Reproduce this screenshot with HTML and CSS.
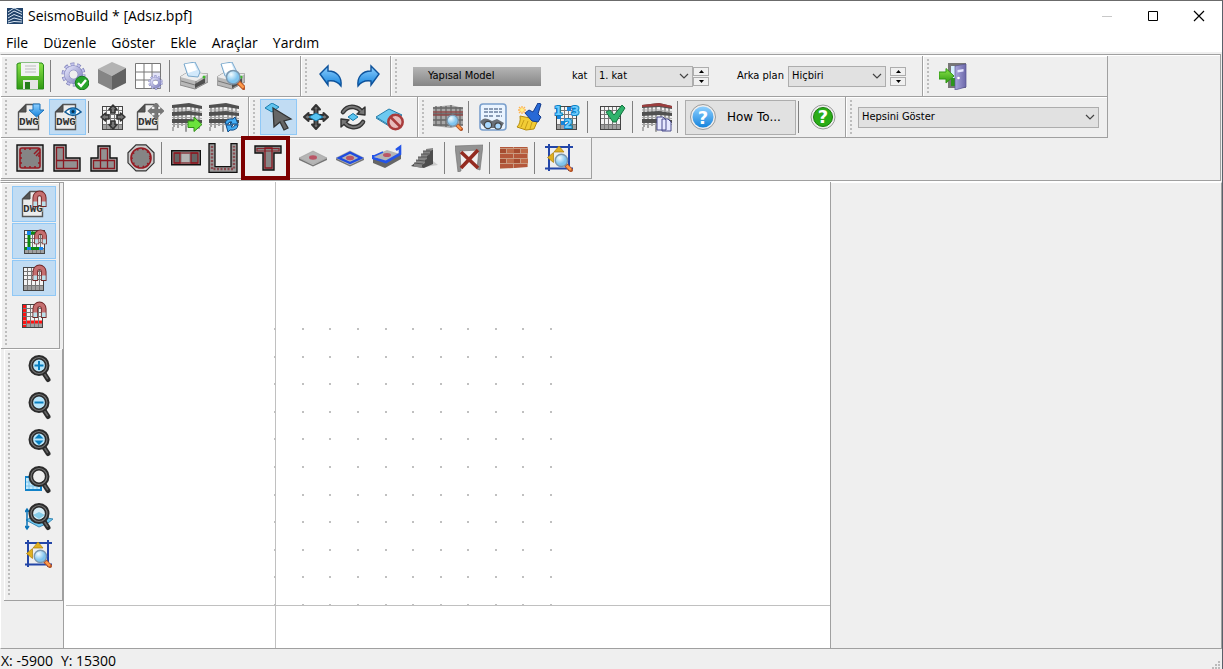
FILE: index.html
```html
<!DOCTYPE html>
<html lang="tr">
<head>
<meta charset="utf-8">
<title>SeismoBuild * [Adsız.bpf]</title>
<link rel="stylesheet" href="styles.css">
</head>
<body>
<svg class="defs" width="0" height="0" aria-hidden="true">
  <defs>
    <linearGradient id="g-green" x2="0" y2="1"><stop stop-color="#8be34a"/><stop offset="1" stop-color="#2f9a12"/></linearGradient>
    <linearGradient id="g-blue" x2="0" y2="1"><stop stop-color="#8fd0ff"/><stop offset="1" stop-color="#1583dc"/></linearGradient>
    <linearGradient id="g-lilac" x2="1" y2="1"><stop stop-color="#dfe0f8"/><stop offset="1" stop-color="#8586c0"/></linearGradient>
    <linearGradient id="g-door" x2="1" y2="0"><stop stop-color="#a9a6dc"/><stop offset="1" stop-color="#6c68aa"/></linearGradient>
    <radialGradient id="g-lens" cx=".35" cy=".3"><stop stop-color="#f4fcff"/><stop offset="1" stop-color="#7fc4ee"/></radialGradient>
    <pattern id="p-brick" width="14" height="10" patternUnits="userSpaceOnUse">
      <rect width="14" height="10" fill="#c99a80"/><rect width="13" height="4" fill="#b4573a"/><rect y="5" width="6" height="4" fill="#a54c30"/><rect x="7" y="5" width="7" height="4" fill="#be6a48"/>
    </pattern>
    <symbol id="mesh" viewBox="0 0 28 28">
      <rect x="3.5" y="3.5" width="20" height="23" fill="#f4f4f4" stroke="#444"/>
      <rect x="4" y="22" width="19" height="4" fill="#a0a0a0"/>
      <path d="M7.500 4v22M11.500 4v22M15.500 4v22M19.500 4v22M4 7.500h19M4 11.500h19M4 15.500h19M4 21.500h19" stroke="#777" fill="none"/>
    </symbol>
    <symbol id="dwg" viewBox="0 0 28 28">
      <path d="M9 1.500h12.500v25h-20V9z" fill="#ececec" stroke="#555" stroke-width="1.400"/>
      <path d="M9 2V9H2z" fill="#555" stroke="#444"/>
      <text x="12" y="22" text-anchor="middle" class="ico-dwg">DWG</text>
    </symbol>
    <symbol id="building" viewBox="0 0 30 30">
      <path d="M2 5v20M6 4v22M10 4v20M14 3v26M19 3v22M23 5v18M27 6v20" stroke="#777" stroke-width="1.300"/>
      <path d="M0 3l17-2 13 3v3L17 5 0 6zM0 10l17-1 13 2v3l-13-1-17 1zM0 17h17l13 1v3H0z" fill="#505050"/>
      <path d="M0 8h16l14 2M0 15.500h17l13 1M0 22.500h30" stroke="#a5a5a5" fill="none" stroke-width="1.200"/>
      <path d="M1 25v4M14 24v6M27 22v5" stroke="#999" stroke-width="1.500"/>
    </symbol>
    <symbol id="magnet" viewBox="0 0 16 20">
      <path d="M3.500 18V8a4.500 4.500 0 0 1 9 0v10" fill="none" stroke="#702626" stroke-width="6"/>
      <path d="M3.500 17V8a4.500 4.500 0 0 1 9 0v9" fill="none" stroke="#c56f70" stroke-width="4"/>
      <path d="M1.500 12h4v5h-4zM10.500 12h4v5h-4z" fill="#b9e0ea"/>
    </symbol>
    <symbol id="loupe" viewBox="0 0 28 28">
      <path d="M18.500 17.500l4.500 7" stroke="#2b2b2b" stroke-width="5" stroke-linecap="round"/>
      <path d="M19.500 19l3 4.500" stroke="#666" stroke-width="1.500" stroke-linecap="round"/>
      <circle cx="14" cy="10.500" r="8.200" fill="none" stroke="#2b2b2b" stroke-width="4.600"/>
      <circle cx="14" cy="10.500" r="8" fill="none" stroke="#777" stroke-width="1.200"/>
    </symbol>
    <symbol id="finder" viewBox="0 0 18 18">
      <path d="M11.500 11.500l4.500 4.500" stroke="#b5562a" stroke-width="4" stroke-linecap="round"/>
      <path d="M12 12l4 4" stroke="#ff9a4a" stroke-width="2.200"/>
      <circle cx="7" cy="7" r="5.800" fill="url(#g-lens)" stroke="#7b97ae" stroke-width="1.300"/>
    </symbol>
    <symbol id="extents" viewBox="0 0 28 28">
      <path d="M4 0v27M24 0v27M0 3h28M0 24.500h28" stroke="#2346a8" stroke-width="2"/>
      <path d="M14 2l5 6H9zM2.500 13.500l6-5v10z" fill="#e0b020" stroke="#a87c08" stroke-width=".7"/>
      <use href="#finder" x="9" y="9" width="19" height="19"/>
    </symbol>
    <symbol id="gear" viewBox="0 0 24 24">
      <circle cx="12" cy="12" r="9.500" fill="none" stroke="#7f80b8" stroke-width="4" stroke-dasharray="3.500 2.470"/>
      <circle cx="12" cy="12" r="9.300" fill="none" stroke="#c4c5ee" stroke-width="3" stroke-dasharray="2.600 3.240" stroke-dashoffset="-.4"/>
      <circle cx="12" cy="12" r="6.500" fill="none" stroke="#7f80b8" stroke-width="5"/>
      <circle cx="12" cy="12" r="6.500" fill="none" stroke="url(#g-lilac)" stroke-width="4"/>
    </symbol>
    <symbol id="printer" viewBox="0 0 28 28">
      <path d="M0 15l8-5 20 2v8l-13 7L0 23z" fill="#b8b8b8" stroke="#8a8a8a"/>
      <path d="M0 15l8-5 20 2-12 7z" fill="#ededed"/><path d="M1 19l14 4M16 19v8" stroke="#777"/>
      <path d="M15 22l10-6v5l-10 5z" fill="#505050"/>
      <path d="M4 2l11-2 5 10-2 5-10-1z" fill="#d2e9fb" stroke="#7ba9cc"/><path d="M5 2l9-1 3 7-9 3z" fill="#fff"/>
      <circle cx="24" cy="15" r="1.500" fill="#3fbb2b"/>
    </symbol>
    <symbol id="cross4" viewBox="0 0 28 28">
      <path d="M14 2l4 4.500h-2.500V12H21.500V10l4.500 4-4.500 4v-2h-6v5.500H18L14 26l-4-4.500h2.500V16h-6v2L2 14l4.500-4v2h6V6.500H10z"/>
    </symbol>
    <symbol id="slab" viewBox="0 0 30 18">
      <path d="M1 9v2l14 6.500 14-6.500V9L15 16z" fill="#777"/><path d="M1 9l14-7 14 7-14 6.500z" fill="#b5b5b5" stroke="#999" stroke-width=".6"/>
    </symbol>
    <symbol id="chevron" viewBox="0 0 10 6"><path d="M1 1l4 4 4-4" fill="none" stroke="#444" stroke-width="1.200"/></symbol>
  </defs>
</svg>

<div class="window">
  <header class="titlebar">
    <svg class="logo" viewBox="0 0 16 17" aria-hidden="true"><path fill="#21436b" d="M0 1h16v16H0z"/><path d="M1 5l6-4 8 4M1 8l6-4 8 3.500M1 11l6-3.500 8 3M1 14l6-3 8 2M1 16l6-1.500 8 .5" fill="none" stroke="#dce8f4"/></svg>
    <h1>SeismoBuild * [Adsız.bpf]</h1>
    <div class="caption">
      <button aria-label="Simge durumuna küçült"><svg viewBox="0 0 12 12"><path d="M1 6.500h10" stroke="#c8c8c8"/></svg></button>
      <button aria-label="Ekranı kapla"><svg viewBox="0 0 12 12"><path d="M1.500 1.500h9v9h-9z" fill="none" stroke="#000"/></svg></button>
      <button aria-label="Kapat"><svg viewBox="0 0 12 12"><path d="M1 1l10 10M11 1L1 11" stroke="#000" stroke-width="1.200"/></svg></button>
    </div>
  </header>
  <nav class="menu">
    <button>File</button><button>Düzenle</button><button>Göster</button><button>Ekle</button><button>Araçlar</button><button>Yardım</button>
  </nav>

  <section class="dock">
    <div class="row">
      <div class="bar bar-file">
        <button class="tool" aria-label="Kaydet"><svg viewBox="0 0 28 28"><path d="M3 1h23l1.500 2v24H1V2z" fill="url(#g-green)" stroke="#278a1a"/><path d="M5 1h18v13H5z" fill="#f3f3f3"/><path d="M9 4h11M9 7h11M9 10h11" stroke="#bbb"/><path d="M7 18h15v9H7z" fill="#e4e4e4"/><path d="M9 20h5v7H9z" fill="#237d18"/></svg></button>
        <span class="sep"></span>
        <button class="tool" aria-label="Ayarlar"><svg viewBox="0 0 28 28"><use href="#gear" width="25" height="25"/><circle cx="21" cy="21" r="6.800" fill="#27a52a" stroke="#16791a"/><path d="M17 21l3 3 5-6" fill="none" stroke="#fff" stroke-width="2.400"/></svg></button>
        <button class="tool" aria-label="Malzemeler"><svg viewBox="0 0 28 28"><path d="M0 7L14 0l14 6-14 8z" fill="#b3b3b3"/><path d="M0 7l14 7v14L0 21z" fill="#858585"/><path d="M14 14l14-8v15l-14 7z" fill="#626262"/></svg></button>
        <button class="tool" aria-label="Izgara ayarları"><svg viewBox="0 0 28 28"><path d="M.5 1.500h25v25H.5z" fill="#fff" stroke="#777"/><path d="M17 10h8v8h-8z" fill="#e3e4f8"/><path d="M9 2v24M17 2v24M1 10h24M1 18h24" stroke="#777"/><use href="#gear" x="13" y="13" width="15" height="15"/></svg></button>
        <span class="sep"></span>
        <button class="tool" aria-label="Yazdır"><svg viewBox="0 0 28 28"><use href="#printer" width="28" height="28"/></svg></button>
        <button class="tool" aria-label="Baskı önizleme"><svg viewBox="0 0 28 28"><use href="#printer" width="28" height="28"/><use href="#finder" x="8" y="7" width="21" height="21"/></svg></button>
      </div>
      <div class="bar bar-undo">
        <button class="tool" aria-label="Geri al"><svg viewBox="0 0 28 28"><path d="M3 12l8-8v5c9 0 14 6 13 15-3-4-7-6-13-5v4z" fill="url(#g-blue)" stroke="#0d529b" stroke-width="1.400"/></svg></button>
        <button class="tool" aria-label="Yinele"><svg viewBox="0 0 28 28"><path d="M25 12l-8-8v5C8 9 3 15 4 24c3-4 7-6 13-5v4z" fill="url(#g-blue)" stroke="#0d529b" stroke-width="1.400"/></svg></button>
      </div>
      <div class="bar bar-model">
        <button class="mode">Yapısal Model</button>
        <label class="lab-floor" for="floor">kat</label>
        <span class="combo"><select id="floor"><option>1. kat</option></select><svg><use href="#chevron"/></svg></span>
        <span class="spin"><button aria-label="Üst kat"><svg viewBox="0 0 5 3"><path d="M0 3h5L2.500 0z"/></svg></button><button aria-label="Alt kat"><svg viewBox="0 0 5 3"><path d="M0 0h5L2.500 3z"/></svg></button></span>
        <label class="lab-back" for="back">Arka plan</label>
        <span class="combo"><select id="back"><option>Hiçbiri</option></select><svg><use href="#chevron"/></svg></span>
        <span class="spin spin-apart"><button aria-label="Önceki plan"><svg viewBox="0 0 5 3"><path d="M0 3h5L2.500 0z"/></svg></button><button aria-label="Sonraki plan"><svg viewBox="0 0 5 3"><path d="M0 0h5L2.500 3z"/></svg></button></span>
      </div>
      <div class="bar bar-exit">
        <button class="tool" aria-label="Çıkış"><svg viewBox="0 0 28 28"><path d="M9 1h18v25H9z" fill="#777"/><path d="M12 4h13v20H12z" fill="#d7f1ff"/><path d="M12 16h6v8h-6z" fill="#2c951c"/><path d="M16 4l11-2v23l-11 3z" fill="url(#g-door)" stroke="#57558f" stroke-width=".7"/><path d="M18.500 8l6-1v2.500l-6 1z" fill="#e5e5ff"/><circle cx="19.500" cy="16" r="1.300" fill="#fff"/><path d="M0 10h7V6.500l8 7.500-8 7v-4H0z" fill="url(#g-green)" stroke="#2f9a12"/></svg></button>
      </div>
    </div>

    <div class="row">
      <div class="bar bar-dwg">
        <button class="tool" aria-label="DWG içe aktar"><svg viewBox="0 0 28 28"><use href="#dwg" width="28" height="28"/><path d="M16 1h7v6h4l-7.500 7L12 7h4z" fill="url(#g-blue)" stroke="#1b70b8"/></svg></button>
        <button class="tool on" aria-label="DWG göster"><svg viewBox="0 0 28 28"><use href="#dwg" width="28" height="28"/><path d="M11 9q8-8 16 0-8 7-16 0z" fill="#fff" stroke="#145c96" stroke-width="1.600"/><circle cx="19" cy="8.500" r="3.300" fill="#1f7fc4"/><circle cx="19" cy="8.500" r="1.500" fill="#082c4c"/></svg></button>
        <span class="sep"></span>
        <button class="tool" aria-label="Izgarayı taşı"><svg viewBox="0 0 28 28"><use href="#mesh" width="28" height="28"/><g fill="#777" stroke="#333" stroke-width="1.600" stroke-linejoin="round"><path d="M14 2l4 4.500h-2V10h-4V6.500h-2zM14 26l-4-4.500h2V18h4v3.500h2zM2 14l4.500-4v2H10v4H6.500v2zM26 14l-4.500-4v2H18v4h3.500v2z"/></g></svg></button>
        <button class="tool" aria-label="DWG taşı"><svg viewBox="0 0 28 28"><use href="#dwg" width="28" height="28"/><use href="#cross4" x="11" y="-1" width="18" height="18" fill="#777" stroke="#777" stroke-width="2"/></svg></button>
        <button class="tool" aria-label="Sonraki kata kopyala"><svg class="wide" viewBox="0 0 30 30"><use href="#building" width="30" height="30"/><path d="M16 19h6v-4l8 7.500-8 7v-4h-6z" fill="#6be23c" stroke="#2f8d16"/></svg></button>
        <button class="tool" aria-label="Modeli yenile"><svg class="wide" viewBox="0 0 30 30"><use href="#building" width="30" height="30"/><path d="M16 22q1-6 8-5l2-2 3 7h-8l2-2q-3-1-4 2zM29 23q-1 6-8 5l-2 2-2-7h7l-2 2q3 1 4-2z" fill="#45aef5" stroke="#114c87"/></svg></button>
      </div>
      <div class="bar bar-edit">
        <button class="tool on" aria-label="Seç"><svg viewBox="0 0 28 28"><path d="M0 5l7-5 7 4-7 5z" fill="#5fc3ee" stroke="#1b7cae"/><path d="M8 5l18 11-7 2 4 7-4 2-4-8-6 5z" fill="#666" stroke="#333" stroke-width="1.300"/></svg></button>
        <button class="tool" aria-label="Taşı"><svg viewBox="0 0 28 28"><use href="#cross4" width="28" height="28" fill="#777" stroke="#333" stroke-width="2" stroke-linejoin="round"/><path d="M7 14l7-4 7 4-7 4z" fill="#58c4f1" stroke="#1678a8"/></svg></button>
        <button class="tool" aria-label="Döndür"><svg viewBox="0 0 28 28"><g fill="none" stroke="#333" stroke-width="4.600" stroke-linecap="round"><path d="M4 9q4-6 11-5 5 1 7 4M24 19q-4 6-11 5-5-1-7-4"/></g><path d="M26 4v8l-8-1zM2 24v-8l8 1z" fill="#777" stroke="#333" stroke-width="1.400" stroke-linejoin="round"/><g fill="none" stroke="#777" stroke-width="2" stroke-linecap="round"><path d="M4 9q4-6 11-5 5 1 7 4M24 19q-4 6-11 5-5-1-7-4"/></g><path d="M9 14l5-3.500 5 3.500-5 3.500z" fill="#58c4f1" stroke="#1678a8"/></svg></button>
        <button class="tool" aria-label="Sil"><svg viewBox="0 0 28 28"><path d="M0 14L13 6l13 6-13 10z" fill="#6cc9f0" stroke="#247eab"/><path d="M0 15l13 8v-2" fill="none" stroke="#247eab"/><circle cx="19.500" cy="19" r="7.200" fill="#e8bcbc" stroke="#a93c3c" stroke-width="2.500"/><path d="M14.500 14l10 10" stroke="#a93c3c" stroke-width="2.500"/></svg></button>
      </div>
      <div class="bar bar-view">
        <button class="tool" aria-label="Kat görünümü"><svg class="wide" viewBox="0 0 30 30"><path d="M0 5l18-2 12 3v17l-12 3-18-2z" fill="#a7a7a7"/><path d="M0 6h30M0 12h30M0 18h30M0 23h30M3 4v20M8 4v20M13 4v21M18 3v22M23 5v19M27 5v18" stroke="#666" stroke-width="1.300"/><path d="M0 10h30M0 13h30" stroke="#8d4848" stroke-width="1.600"/><use href="#finder" x="13" y="12" width="17" height="17"/></svg></button>
        <span class="sep"></span>
        <button class="tool" aria-label="Görünüm ayarları"><svg viewBox="0 0 28 28"><rect x="1" y="1" width="26" height="26" rx="3" fill="#eaf4ff" stroke="#7a9fcc" stroke-width="1.600"/><path d="M5 6h18M5 9h18M5 13h10M17 13h6" stroke="#6b7f9e" stroke-width="1.600" stroke-dasharray="4 1"/><path d="M1 19q3-5 8-3l4 2 5-2 7 4-3 5H6z" fill="#6a7078"/><circle cx="9" cy="22" r="3.600" fill="#a9d8ff" stroke="#444" stroke-width="1.200"/><circle cx="19" cy="23" r="3.200" fill="#a9d8ff" stroke="#444" stroke-width="1.200"/></svg></button>
        <button class="tool" aria-label="Temizle"><svg viewBox="0 0 28 28"><path d="M4 13l10 2 7 4-3 7-8 1-9-3q4-4 3-11z" fill="#f2cc35" stroke="#b58c0c"/><path d="M8 17l-3 7M12 18l-3 8M16 19l-2 7" stroke="#c79d18"/><path d="M9 10l4-3 4 2 5-9 3 1-3 10 3 3-3 5-6-1z" fill="#2769d6" stroke="#123a8c"/><path d="M6 3v8M2 7h8M3 4l6 6M9 4l-6 6" stroke="#ffb550" stroke-width="1.300"/><circle cx="6" cy="7" r="2" fill="#fff08a"/></svg></button>
        <button class="tool" aria-label="Numaralandır"><svg viewBox="0 0 28 28"><use href="#mesh" width="28" height="28"/><path d="M14 4h4v4h-4zM4 12h4v4H4zM8 18h4v4H8z" fill="#1685dd"/><g class="ico-num"><text x="1" y="12">1</text><text x="18" y="12">3</text><text x="11" y="25">2</text></g></svg></button>
        <span class="sep"></span>
        <button class="tool" aria-label="Modeli denetle"><svg viewBox="0 0 28 28"><use href="#mesh" width="28" height="28" x="-1"/><path d="M8 9l4-2 4 5 8-10 3 3-9 14h-3z" fill="#2fb36c" stroke="#14733f"/></svg></button>
        <span class="sep"></span>
        <button class="tool" aria-label="Katı kopyala"><svg class="wide" viewBox="0 0 30 30"><use href="#building" width="30" height="30"/><path d="M0 3l17-2 13 3v2L17 4 0 5z" fill="#9c3e3e"/><path d="M15 15h6l3 3v10h-9zM20 17h6l3 3v9h-9z" fill="#e6e8ff" stroke="#4a4c8c"/></svg></button>
        <span class="sep"></span>
        <button class="howto"><svg viewBox="0 0 28 28" aria-hidden="true"><circle cx="14" cy="14" r="12.500" fill="#eee" stroke="#999"/><circle cx="14" cy="14" r="10.500" fill="url(#g-blue)"/><text x="14" y="21" text-anchor="middle" class="ico-help">?</text></svg><span>How To...</span></button>
        <span class="sep"></span>
        <button class="tool" aria-label="Yardım"><svg viewBox="0 0 28 28"><circle cx="14" cy="14" r="12" fill="#eee" stroke="#999"/><circle cx="14" cy="14" r="9.500" fill="#2aad18" stroke="#197c0d"/><text x="14" y="20" text-anchor="middle" class="ico-help">?</text></svg></button>
      </div>
      <div class="bar bar-show">
        <span class="combo combo-wide"><select aria-label="Gösterim"><option>Hepsini Göster</option></select><svg><use href="#chevron"/></svg></span>
      </div>
    </div>

    <div class="row">
      <div class="bar bar-elem">
        <button class="tool" aria-label="Dikdörtgen kolon"><svg viewBox="0 0 28 28"><path d="M1 1h26v26H1z" fill="#b9b9b9" stroke="#111" stroke-width="1.400"/><rect x="4" y="4" width="20" height="20" rx="2" fill="#858585" stroke="#961a22" stroke-width="1.600"/><path d="M4 9h2M4 14h2M4 19h2M22 12h2M22 19h2M9 4v2M14 4v2M9 22v2M14 22v2M19 22v2M18 10l5-5M20 12l4-4" stroke="#961a22" stroke-width="1.500"/></svg></button>
        <button class="tool" aria-label="L kolon"><svg viewBox="0 0 28 28"><path d="M1 1h12v13h14v13H1z" fill="#a5a5a5" stroke="#111" stroke-width="1.400"/><path d="M3.500 3.500h7v21h-7zM3.500 16.500h21v8h-21z" fill="#858585" fill-opacity=".6" stroke="#8a1820" stroke-width="1.300"/></svg></button>
        <button class="tool" aria-label="T kolon"><svg viewBox="0 0 28 28"><path d="M8 2h12v12h7v13H1V14h7z" fill="#a5a5a5" stroke="#111" stroke-width="1.400"/><path d="M10.500 4.500h7v20h-7zM3.500 16.500h21v8h-21z" fill="#858585" fill-opacity=".6" stroke="#8a1820" stroke-width="1.300"/></svg></button>
        <button class="tool" aria-label="Dairesel kolon"><svg viewBox="0 0 28 28"><path d="M9 .8h10l8 8v10l-8 8H9l-8-8v-10z" fill="#ccc" stroke="#333" stroke-width="1.200"/><circle cx="14" cy="14" r="10" fill="#858585" stroke="#961a22" stroke-width="1.600"/><circle cx="14" cy="14" r="8.800" fill="none" stroke="#961a22" stroke-width="1.500" stroke-dasharray="1.500 3.800"/></svg></button>
        <span class="sep"></span>
        <button class="tool" aria-label="Perde"><svg class="wide" viewBox="0 0 30 30"><path d="M.7 7.700h28.600v14H.7z" fill="#999" stroke="#111" stroke-width="1.400"/><path d="M3 10h6v10H3zM20 10h7v10h-7z" fill="#666" stroke="#8a1820" stroke-width="1.300"/><path d="M3 10h24M3 20h24" stroke="#8a1820" stroke-width="1.200"/><path d="M11 11h7v8h-7z" fill="#b5b5b5"/></svg></button>
        <button class="tool" aria-label="U perde"><svg class="wide" viewBox="0 0 30 30"><path d="M1 .7h6v23h16V.7h6v28.600H1z" fill="#999" stroke="#111" stroke-width="1.300"/><path d="M4 3v23h22V3" fill="none" stroke="#8a4a50" stroke-width="2.400" stroke-dasharray="2 1.500"/></svg></button>
        <span class="sep"></span>
        <button class="tool marked" aria-label="Kiriş"><svg viewBox="0 0 28 28"><path d="M1 2h26v7h-7v17H9V9H1z" fill="#888" stroke="#111" stroke-width="1.400"/><path d="M3 4.500h22v2.500H3z" fill="none" stroke="#8a2830" stroke-width="1.200"/><path d="M11 4h7v20h-7z" fill="none" stroke="#8a1820" stroke-width="1.300"/></svg></button>
        <span class="sep"></span>
        <button class="tool" aria-label="Döşeme"><svg class="wide" viewBox="0 0 30 30"><use href="#slab" y="6" width="30" height="18"/><ellipse cx="15" cy="14.500" rx="4" ry="2.200" fill="#ba5566"/></svg></button>
        <button class="tool" aria-label="Kenar döşeme"><svg class="wide" viewBox="0 0 30 30"><use href="#slab" y="6" width="30" height="18"/><path d="M4 15l11-5.500L26 15l-11 5z" fill="none" stroke="#1e4be0" stroke-width="2.400"/><ellipse cx="15" cy="15" rx="4" ry="2.200" fill="#ba5566"/></svg></button>
        <button class="tool" aria-label="Serbest döşeme"><svg class="wide" viewBox="0 0 30 30"><path d="M1 15v5l12 5 16-9v-5l-15 8z" fill="#666"/><path d="M1 13l14-6 13 4-14 8z" fill="#b5b5b5"/><path d="M1 12v3l13 4 14-8V4l-4 3" fill="none" stroke="#2455e8" stroke-width="2.600"/><path d="M2 13l9-4" stroke="#2455e8" stroke-width="1.500"/><ellipse cx="15" cy="12" rx="4" ry="2" fill="#ba5566"/></svg></button>
        <button class="tool" aria-label="Merdiven"><svg viewBox="0 0 28 28"><path d="M15 23l13-2-5-4z" fill="#ccc"/><path d="M1 22l13 2 9-4V5z" fill="#4d4d4d"/><path d="M1 22h3v-3h2v-3h2v-3h3v-3h2V7h3V5l7-1v1l-3 2v3l-3 2v3l-2 1v3l-3 2v3z" fill="#858585"/><path d="M4 19l9 1M6 16l9 1M8 13l9 0M11 10l9 0M13 7l8 0" stroke="#555"/></svg></button>
        <span class="sep"></span>
        <button class="tool" aria-label="Çapraz"><svg viewBox="0 0 28 28"><path d="M0 2l28-1-3 25-3-1 2-19-19 1 1 20-3 1z" fill="#929292" stroke="#777" stroke-width=".7"/><path d="M6 8l17 16M23 6L6 24" stroke="#942b20" stroke-width="3.600"/></svg></button>
        <span class="sep"></span>
        <button class="tool" aria-label="Dolgu duvar"><svg viewBox="0 0 28 28"><path d="M0 3h28v20l-28 2z" fill="url(#p-brick)"/></svg></button>
        <span class="sep"></span>
        <button class="tool" aria-label="Model sınırları"><svg viewBox="0 0 28 28"><use href="#extents" width="28" height="28"/></svg></button>
      </div>
    </div>
  </section>

  <main class="work">
    <aside class="side">
      <div class="vbar vbar-snap">
        <button class="snap on" aria-label="DWG yakala"><svg viewBox="0 0 28 28"><use href="#dwg" x="1" width="28" height="28"/><use href="#magnet" x="12" y="0" width="15" height="19"/></svg></button>
        <button class="snap on" aria-label="Eleman yakala"><svg viewBox="0 0 28 28"><use href="#mesh" x="1" width="28" height="28"/><path d="M9 22V6h12M4.500 21.500h18" fill="none" stroke="#0b8a12" stroke-width="3"/><path d="M7 4h4v4H7zM7 20h4v3H7zM19 20h4v3h-4z" fill="#1685ee"/><use href="#magnet" x="13" y="2" width="15" height="17"/></svg></button>
        <button class="snap on" aria-label="Izgara yakala"><svg viewBox="0 0 28 28"><use href="#mesh" width="28" height="28"/><use href="#magnet" x="12" y="0" width="15" height="19"/></svg></button>
        <button class="snap" aria-label="Aks yakala"><svg viewBox="0 0 28 28"><use href="#mesh" x="-1" width="28" height="28"/><path d="M4.500 4v22" stroke="#f11" stroke-width="3" stroke-dasharray="3 1"/><path d="M3 21h20" stroke="#f11" stroke-width="3" stroke-dasharray="3 1"/><use href="#magnet" x="12" y="0" width="15" height="19"/></svg></button>
      </div>
      <div class="vbar vbar-zoom">
        <button class="zoom" aria-label="Yakınlaştır"><svg viewBox="0 0 28 28"><circle cx="14" cy="10.500" r="8" fill="#b9e6fb"/><path d="M14 6v9M9.500 10.500h9" stroke="#087fc0" stroke-width="2"/><use href="#loupe" width="28" height="28"/></svg></button>
        <button class="zoom" aria-label="Uzaklaştır"><svg viewBox="0 0 28 28"><circle cx="14" cy="10.500" r="8" fill="#b9e6fb"/><path d="M9.500 10.500h9" stroke="#087fc0" stroke-width="2"/><use href="#loupe" width="28" height="28"/></svg></button>
        <button class="zoom" aria-label="Dinamik yakınlaştırma"><svg viewBox="0 0 28 28"><circle cx="14" cy="10.500" r="8" fill="#b9e6fb"/><path d="M9.500 9.500h9L14 5zM9.500 11.500h9L14 16z" fill="#087fc0"/><use href="#loupe" width="28" height="28"/></svg></button>
        <button class="zoom" aria-label="Pencere yakınlaştır"><svg viewBox="0 0 28 28"><path d="M0 11h16v13H0z" fill="#c3e9fc" stroke="#1182c8" stroke-width="2"/><path d="M4 12v11M8 12v11M12 12v11M1 16h14M1 20h14" stroke="#7fc5ec"/><circle cx="14" cy="10.500" r="8" fill="#efefef"/><use href="#loupe" width="28" height="28"/></svg></button>
        <button class="zoom" aria-label="Tümünü göster"><svg viewBox="0 0 28 28"><path d="M1 17l9-4 18 3-5 4-9 4z" fill="#6fc7ef" stroke="#3a89b5"/><path d="M2 7v18M0 9l2-3 2 3M0 23l2 3 2-3" fill="none" stroke="#0873b8" stroke-width="1.500"/><circle cx="14" cy="10.500" r="8" fill="#d9edf5"/><path d="M8 12l6-3 6 3-6 4z" fill="#86cde8"/><use href="#loupe" width="28" height="28"/></svg></button>
        <button class="zoom" aria-label="Sınırlara yakınlaştır"><svg viewBox="0 0 28 28"><use href="#extents" x="-1" width="28" height="28"/></svg></button>
      </div>
    </aside>
    <div class="canvas">
      <svg width="100%" height="100%" shape-rendering="crispEdges" aria-label="Plan görünümü">
        <defs><path id="dots" d="M210 0h2m26 0h2m25 0h2m26 0h2m26 0h2m25 0h2m26 0h2m25 0h2m26 0h2m25 0h2m26 0h2" stroke="#c0c0c0" stroke-width="2"/></defs>
        <use href="#dots" y="147"/><use href="#dots" y="175"/><use href="#dots" y="202"/><use href="#dots" y="230"/><use href="#dots" y="257"/><use href="#dots" y="285"/><use href="#dots" y="313"/><use href="#dots" y="340"/><use href="#dots" y="368"/><use href="#dots" y="395"/><use href="#dots" y="423"/>
        <path d="M211.500 0v2000M2 423.500h4000" stroke="#c0c0c0"/>
      </svg>
    </div>
    <section class="panel" aria-label="Özellikler"></section>
  </main>
  <footer class="status"><span>X: -5900</span><span>Y: 15300</span>
    <svg class="grip" viewBox="0 0 8 8" aria-hidden="true"><path d="M6 0h2v2H6zM3 3h2v2H3zM6 3h2v2H6zM0 6h2v2H0zM3 6h2v2H3zM6 6h2v2H6z" fill="#bbb"/></svg>
  </footer>
</div>
</body>
</html>
```
FILE: styles.css
```css
* { box-sizing: border-box; }
body { margin: 0; background: #efefef; color: #000; font: 14px/20px "Open Sans", "Noto Sans", sans-serif; }
button, select { font: inherit; color: inherit; border: 0; background: none; padding: 0; margin: 0; border-radius: 0; }
svg { display: block; flex: none; }
.defs { position: absolute; }
.ico-dwg { font: bold 11px "Liberation Mono", monospace; fill: #333; stroke: #eee; stroke-width: 1px; paint-order: stroke; }
.ico-num { font: bold 12px "DejaVu Sans", sans-serif; fill: #6ecbff; stroke: #0b84c7; stroke-width: 2px; paint-order: stroke; }
.ico-help { font: bold 18px "DejaVu Sans", sans-serif; fill: #fff; }
.window { min-height: 100vh; display: flex; flex-direction: column; border-top: 1px solid #6b6b6b; border-right: 1px solid #5a606a; }

.titlebar { display: flex; align-items: center; height: 29px; background: #fff; padding-left: 7px; }
.logo { width: 16px; height: 17px; margin-right: 5px; }
.titlebar h1 { font-size: 14px; font-weight: 400; margin: 0; flex: 1; }
.caption { display: flex; }
.caption button { width: 46px; height: 29px; display: grid; place-items: center; }
.caption svg { width: 12px; height: 12px; }

.menu { display: flex; gap: 15px; background: #fff; padding: 3px 6px 0; height: 22px; }

.dock { margin-top: 2px; margin-right: 1px; border: 1px solid #a0a0a0; border-left-color: #fff; padding: 1px 0; box-shadow: inset 0 1px #fff, 0 1px #fff; font: 11px/14px "DejaVu Sans Condensed", "DejaVu Sans", sans-serif; }
.row { display: flex; height: 41px; }
.bar { position: relative; display: flex; align-items: center; padding: 0 3px 0 11px; border-right: 1px solid #a0a0a0; border-bottom: 1px solid #a0a0a0; box-shadow: inset 1px 1px #fff; }
.bar::before { content: ""; position: absolute; left: 4px; top: 3px; bottom: 3px; width: 2px; background: repeating-linear-gradient(#bdbdbd 0 2px, transparent 2px 4px); }
.bar-file { padding-left: 10px; padding-right: 51px; }
.bar-undo { padding-right: 4px; }
.bar-model { padding-left: 22px; padding-right: 16px; }
.bar-exit { padding-right: 136px; }
.bar-dwg { padding-right: 6px; }
.bar-edit { padding-right: 9px; }
.bar-view { padding-right: 4px; }
.bar-show { padding-left: 12px; padding-right: 8px; }
.bar-elem { padding-left: 10px; padding-right: 14px; }
.tool { width: 37px; height: 36px; display: grid; place-items: center; flex: none; }
.tool svg, .snap svg, .zoom svg, .howto svg { width: 28px; height: 28px; }
.tool svg.wide { width: 30px; height: 30px; }
.on { background: #c1dcf3; border: 1px solid #90c8f6; }
.sep { width: 8px; height: 32px; flex: none; padding-left: 2px; }
.sep::before { content: ""; display: block; width: 1px; height: 100%; background: #808080; }
.marked { width: 49px; height: 44px; margin: 0 -4px 0 -8px; padding-left: 5px; border: 4px solid #7d0000; position: relative; background: #efefef; }

.mode { width: 128px; height: 19px; background: linear-gradient(#b5b5b5, #868686); text-align: left; padding-left: 15px; }
.lab-floor { width: 54px; padding-left: 31px; }
.lab-back { width: 79px; padding-left: 28px; white-space: nowrap; }
.combo { display: grid; width: 98px; height: 21px; align-items: center; }
.combo select { grid-area: 1 / 1; width: 100%; height: 100%; appearance: none; border: 1px solid #adadad; background: #e1e1e1; padding: 0 18px 0 3px; }
.combo svg { grid-area: 1 / 1; justify-self: end; margin-right: 4px; width: 10px; height: 6px; pointer-events: none; }
.combo-wide { width: 241px; }
.spin { display: grid; gap: 1px; width: 16px; }
.spin-apart { margin-left: 4px; }
.spin button { height: 9px; border: 1px solid #adadad; background: #f0f0f0; display: grid; place-items: center; }
.spin svg { width: 5px; height: 3px; }
.howto { display: flex; align-items: center; width: 111px; height: 35px; margin-left: 2px; padding-left: 3px; gap: 10px; border: 1px solid #adadad; background: #e1e1e1; font: 12px/16px "DejaVu Sans", sans-serif; }

.work { flex: 1; display: grid; grid-template-columns: 64px minmax(0, 1fr) 32%; margin-top: 1px; }
.side { border: 1px solid #a0a0a0; border-left-color: #fff; }
.vbar { position: relative; border-right: 1px solid #a0a0a0; border-bottom: 1px solid #a0a0a0; box-shadow: inset 1px 1px #fff; }
.vbar::before { content: ""; position: absolute; left: 4px; top: 4px; bottom: 3px; width: 2px; background: repeating-linear-gradient(#bdbdbd 0 2px, transparent 2px 4px); }
.vbar-snap { display: grid; gap: 1px; margin-right: 3px; padding: 3px 3px 15px 11px; }
.vbar-zoom { display: grid; margin-left: 3px; padding: 1px 0 28px 11px; justify-items: center; }
.snap { width: 44px; height: 36px; display: grid; place-items: center; }
.zoom { width: 37px; height: 37px; display: grid; place-items: center; }
.canvas { background: #fff; border-right: 1px solid #a0a0a0; border-bottom: 1px solid #a0a0a0; position: relative; }
.canvas svg { position: absolute; inset: 0; }
.panel { border-top: 1px solid #fff; border-right: 1px solid #a0a0a0; border-bottom: 1px solid #a0a0a0; }
.status { display: flex; align-items: center; gap: 8px; height: 20px; padding: 3px 2px 0 1px; }
.grip { width: 8px; height: 8px; margin-left: auto; align-self: flex-end; }
```
